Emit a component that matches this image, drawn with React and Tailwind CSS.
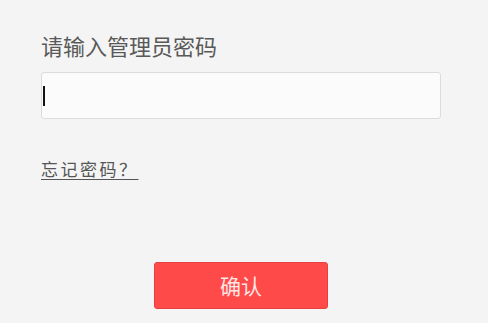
export default function App() {
  return (
    <div className="w-[488px] h-[323px] bg-[#f4f4f4] overflow-hidden" style={{ fontFamily: '"Noto Sans CJK SC", "Noto Sans", sans-serif' }}>
      <div className="pl-[41px] pt-[29px]">
        <div className="text-[22px] leading-[32px] text-[#595959]">请输入管理员密码</div>
        <div className="mt-[11px] w-[400px] h-[47px] bg-[#fbfbfb] border border-[#dcdcdc] rounded-[3px] flex items-center pl-[1px]">
          <div className="w-[2px] h-[20px] bg-[#111]"></div>
        </div>
        <div className="mt-[40px] leading-[20px]">
          <span className="text-[17px] leading-[20px] tracking-[2.5px] text-[#555] underline underline-offset-[3px]">忘记密码？</span>
        </div>
      </div>
      <div className="flex justify-center mt-[83px] pr-[6px]">
        <div className="w-[174px] h-[47px] bg-[#ff4a4a] border border-[#e84040] rounded-[3px] flex items-center justify-center text-[21px] text-[#ffe6e6]">确认</div>
      </div>
    </div>
  );
}
